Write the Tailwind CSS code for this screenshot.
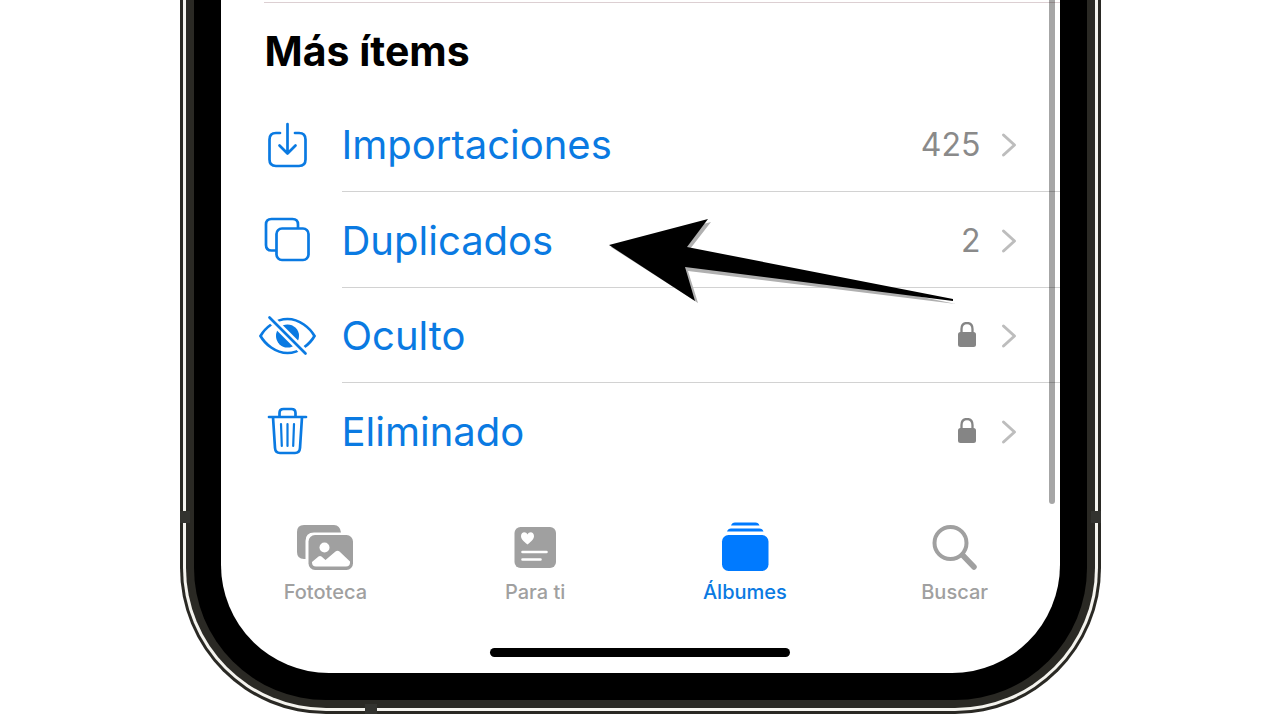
<!DOCTYPE html>
<html lang="es">
<head>
<meta charset="utf-8">
<meta name="viewport" content="width=device-width, initial-scale=1">
<title>Álbumes</title>
<script src="https://cdn.jsdelivr.net/npm/@tailwindcss/browser@4"></script>
</head>
<body class="min-h-screen overflow-hidden bg-white font-['Inter','Liberation_Sans',sans-serif]">
<!-- Phone frame: dark edge, bright steel line, dark bezel, black bezel -->
<main class="relative mx-auto max-w-[921px] rounded-b-[146px] bg-[#2a2924] px-[3px] pb-[3px]">
  <div class="rounded-b-[143px] bg-[#f4f3ee] px-[3px] pb-[3px]">
    <div class="rounded-b-[140px] bg-[#2a2924] px-[8px] pb-[8px]">
      <div class="rounded-b-[132px] bg-black px-[27px] pb-[27px]">
        <div class="relative overflow-hidden rounded-b-[108px] bg-white">
          <section class="pt-[2px]">
            <div class="ml-[43px] border-t border-[#dccfd2]"></div>
            <h1 class="pt-[22px] pb-[19px] pl-[44px] text-[41px] leading-[52px] font-bold text-black">Más ítems</h1>
            <ul class="text-[#0a7ae2]">
              <li>
                <a href="#importaciones" class="flex h-24 items-stretch">
                  <span class="flex w-[121px] shrink-0 items-center pl-[36px]">
                    <svg class="h-[60px] w-[60px]" viewBox="0 0 60 60" fill="none" stroke="currentColor" stroke-width="2.7" stroke-linecap="round" stroke-linejoin="round"><path d="M23 19h-4q-6.500 0-6.500 6.500v20q0 6.500 6.500 6.500h23q6.500 0 6.500-6.500v-20q0-6.500-6.500-6.500h-4M30.500 10v29M22.500 31.500l8 8 8-8"/></svg>
                  </span>
                  <span class="flex flex-1 items-center border-b border-[#d2d2d2] pt-[2px] pr-[43px]">
                    <span class="flex-1 text-[40px] leading-[52px]">Importaciones</span>
                    <span class="text-[32px] text-[#8a8a8a]">425</span>
                    <svg class="ml-[20px] h-[28px] w-[16px]" viewBox="0 0 16 28" fill="none" stroke="#bdbdbd" stroke-width="3" stroke-linecap="round" stroke-linejoin="round"><path d="M2.500 4l11 10-11 10"/></svg>
                  </span>
                </a>
              </li>
              <li>
                <a href="#duplicados" class="flex h-24 items-stretch">
                  <span class="flex w-[121px] shrink-0 items-center pl-[36px]">
                    <svg class="h-[60px] w-[60px]" viewBox="0 0 60 60" fill="none" stroke="currentColor" stroke-width="2.700" stroke-linejoin="round"><rect x="19.500" y="18.500" width="32" height="31.500" rx="5.500"/><path d="M19.500 40.500h-5q-5.500 0-5.500-5.500v-20.500q0-5.500 5.500-5.500h21q5.500 0 5.500 5.500v4"/></svg>
                  </span>
                  <span class="flex flex-1 items-center border-b border-[#d2d2d2] pt-[2px] pr-[43px]">
                    <span class="flex-1 text-[40px] leading-[52px]">Duplicados</span>
                    <span class="text-[32px] text-[#8a8a8a]">2</span>
                    <svg class="ml-[20px] h-[28px] w-[16px]" viewBox="0 0 16 28" fill="none" stroke="#bdbdbd" stroke-width="3" stroke-linecap="round" stroke-linejoin="round"><path d="M2.500 4l11 10-11 10"/></svg>
                  </span>
                </a>
              </li>
              <li>
                <a href="#oculto" class="flex h-[95px] items-stretch">
                  <span class="flex w-[121px] shrink-0 items-center pl-[36px]">
                    <svg class="h-[60px] w-[60px]" viewBox="0 0 60 60" fill="none" stroke="currentColor" stroke-width="2.700"><path d="M3.500 30C8 22 18.500 13 30.500 13S53 22 57.500 30C53 38 42.500 47 30.500 47S8 38 3.500 30z"/><circle cx="30.500" cy="30" r="11.500" fill="currentColor" stroke="none"/><path d="M11.500 10.500l38 38" stroke="#fff" stroke-width="8"/><path d="M12.500 11.500l36 36" stroke-linecap="round"/></svg>
                  </span>
                  <span class="flex flex-1 items-center border-b border-[#d2d2d2] pt-[2px] pr-[43px]">
                    <span class="flex-1 text-[40px] leading-[52px]">Oculto</span>
                    <svg class="h-[28px] w-[20px]" viewBox="0 0 20 28" aria-label="Bloqueado"><rect x="1" y="10" width="18" height="15" rx="2.500" fill="#858585"/><path d="M4.500 11V7q0-6 5.500-6t5.500 6v4" fill="none" stroke="#858585" stroke-width="2.300"/></svg>
                    <svg class="ml-[24px] h-[28px] w-[16px]" viewBox="0 0 16 28" fill="none" stroke="#bdbdbd" stroke-width="3" stroke-linecap="round" stroke-linejoin="round"><path d="M2.500 4l11 10-11 10"/></svg>
                  </span>
                </a>
              </li>
              <li>
                <a href="#eliminado" class="flex h-[95px] items-stretch">
                  <span class="flex w-[121px] shrink-0 items-center pl-[36px]">
                    <svg class="h-[60px] w-[60px]" viewBox="0 0 60 60" fill="none" stroke="currentColor" stroke-width="2.700" stroke-linecap="round" stroke-linejoin="round"><path d="M12 16h37M22.500 15.500v-3.500q0-4 4-4h8q4 0 4 4v3.500M16 16l2 31q.4 5 5 5h15q4.600 0 5-5l2-31"/><path d="M24 23l.8 22M30.500 23v22M37 23l-.8 22" stroke-width="2.200"/></svg>
                  </span>
                  <span class="flex flex-1 items-center pt-[2px] pr-[43px]">
                    <span class="flex-1 text-[40px] leading-[52px]">Eliminado</span>
                    <svg class="h-[28px] w-[20px]" viewBox="0 0 20 28" aria-label="Bloqueado"><rect x="1" y="10" width="18" height="15" rx="2.500" fill="#858585"/><path d="M4.500 11V7q0-6 5.500-6t5.500 6v4" fill="none" stroke="#858585" stroke-width="2.300"/></svg>
                    <svg class="ml-[24px] h-[28px] w-[16px]" viewBox="0 0 16 28" fill="none" stroke="#bdbdbd" stroke-width="3" stroke-linecap="round" stroke-linejoin="round"><path d="M2.500 4l11 10-11 10"/></svg>
                  </span>
                </a>
              </li>
            </ul>
          </section>

          <nav class="grid grid-cols-4 pt-[42px] text-[20px] leading-6 font-medium text-[#a0a0a0]">
            <a href="#fototeca" class="flex flex-col items-center gap-[8px]">
              <svg class="h-[52px] w-[60px]" viewBox="0 0 60 52"><path d="M10.500 39H9q-7 0-7-7V12q0-7 7-7h30q6 0 7 7.500H19q-8.500 0-8.500 8.500z" fill="#a0a0a0"/><rect x="13.500" y="15" width="44.500" height="35" rx="6.500" fill="#a0a0a0"/><circle cx="29.500" cy="27.500" r="5" fill="#fff"/><path d="M17 42l6.500-5.500q1.500-1 3 0l4 3.500 10-8.500q2-1.500 4 0L55 41.500v1q0 4-4 4H21q-4 0-4-4z" fill="#fff"/></svg>
              Fototeca
            </a>
            <a href="#para-ti" class="flex flex-col items-center gap-[8px]">
              <svg class="h-[52px] w-[60px]" viewBox="0 0 60 52"><rect x="9.500" y="7" width="41.500" height="41" rx="6" fill="#a0a0a0"/><path d="M22.500 24.500C18 21 16 19 16 16c0-4.500 5-5 6.500-1.500C24 11 29 11.500 29 16c0 3-2 5-6.500 8.500z" fill="#fff"/><path d="M17.500 32h24M17.500 39.500h18" stroke="#fff" stroke-width="2.600" stroke-linecap="round"/></svg>
              Para ti
            </a>
            <a href="#albumes" aria-current="page" class="flex flex-col items-center gap-[8px] text-[#0a7ae2]">
              <svg class="h-[52px] w-[60px]" viewBox="0 0 60 52" fill="#007aff"><path d="M16 5.500q1-3 4-3h20.500q3 0 4 3zM12 11.500q1-3 4-3h28.500q3 0 4 3z"/><rect x="7" y="15" width="46.500" height="36" rx="6.500"/></svg>
              Álbumes
            </a>
            <a href="#buscar" class="flex flex-col items-center gap-[8px]">
              <svg class="h-[52px] w-[60px]" viewBox="0 0 60 52" fill="none" stroke="#a0a0a0"><circle cx="25.500" cy="23" r="16" stroke-width="4"/><path d="M37.500 35l11.500 12" stroke-width="5.500" stroke-linecap="round"/></svg>
              Buscar
            </a>
          </nav>
          <div class="mx-auto mt-[44px] mb-[16px] h-[9px] w-[300px] rounded-full bg-black"></div>

          <!-- Scroll indicator -->
          <div class="absolute top-0 right-[5px] h-[504px] w-[6px] rounded-b-full bg-black/35"></div>
          <!-- Pointer arrow over the list -->
          <svg class="absolute top-[210px] left-[380px] h-[100px] w-[360px]" viewBox="0 0 360 100" aria-hidden="true"><path d="M10 37L110 12 89 39 355 94 87 61 97 93z" fill="#b0b0b0"/><path d="M8 35L107 9 86 37 352 89V91L84 57 94 91z" fill="#000"/></svg>
        </div>
      </div>
    </div>
  </div>
  <!-- Antenna bands -->
  <span class="absolute top-[511px] left-0 h-[12px] w-[10px] bg-[#33332f]"></span>
  <span class="absolute top-[511px] right-0 h-[12px] w-[10px] bg-[#33332f]"></span>
  <span class="absolute bottom-0 left-[185px] h-[10px] w-[12px] bg-[#33332f]"></span>
</main>
</body>
</html>
